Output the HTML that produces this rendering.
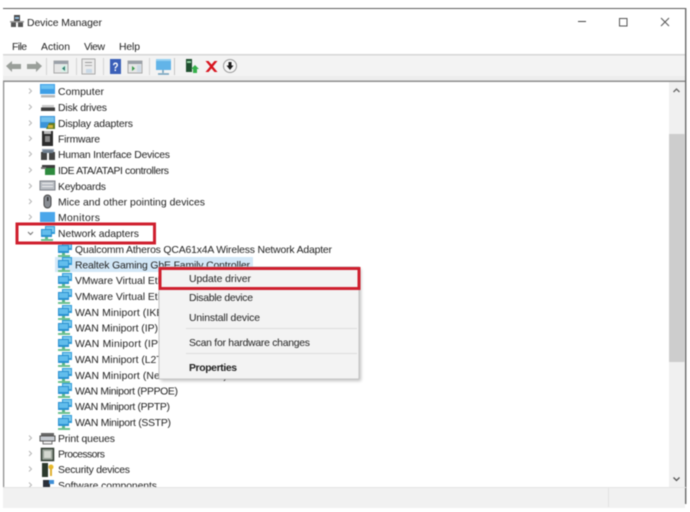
<!DOCTYPE html>
<html><head><meta charset="utf-8"><style>
html,body{margin:0;padding:0;background:#fff;width:690px;height:512px;overflow:hidden}
svg{display:block;filter:blur(.5px)}
text{font-family:"Liberation Sans",sans-serif;font-size:10.4px;fill:#222}
</style></head><body>
<svg width="690" height="512" viewBox="0 0 690 512" xmlns="http://www.w3.org/2000/svg">
<defs>
<g id="net"><rect x="5" y="0" width="10" height="8" fill="#2f9ad8"/><rect x="6" y="1" width="8" height="5" fill="#7fcdf0"/><rect x="1" y="3" width="11" height="8" fill="#2a90d0"/><rect x="2" y="4" width="9" height="5" fill="#62bdec"/><rect x="5" y="11" width="3" height="2" fill="#59b58a"/><rect x="1" y="13" width="12" height="2" fill="#6cc08e"/></g>
<path id="chev" d="M0 0l2.500 2.500L0 5" fill="none" stroke="#b5b5b5" stroke-width="1"/>
</defs>

<!-- window frame -->
<rect x="3" y="8" width="683" height="1" fill="#5c5c5c"/>
<rect x="685" y="8" width="1.400" height="496" fill="#6a6a6a"/>
<rect x="3" y="82" width="1.200" height="406" fill="#8a8a8a"/>

<!-- title -->
<g>
<rect x="14" y="15" width="6" height="6" fill="#4a4a4a"/><rect x="11" y="22" width="5" height="5" fill="#555"/><rect x="18" y="22" width="5" height="5" fill="#555"/><rect x="10" y="21" width="14" height="1.500" fill="#999"/><rect x="15" y="17" width="4" height="2" fill="#8fb8d8"/>
</g>
<text x="27" y="26" textLength="75" lengthAdjust="spacing">Device Manager</text>
<rect x="578" y="21" width="8" height="1" fill="#444"/>
<rect x="619.500" y="18.500" width="7.500" height="7.500" fill="none" stroke="#555" stroke-width="1"/>
<path d="M661 18l8 8M669 18l-8 8" stroke="#555" stroke-width="1" fill="none"/>

<!-- menu -->
<text x="12" y="50" textLength="15" lengthAdjust="spacing">File</text>
<text x="41" y="50" textLength="29" lengthAdjust="spacing">Action</text>
<text x="84" y="50" textLength="21" lengthAdjust="spacing">View</text>
<text x="119" y="50" textLength="21" lengthAdjust="spacing">Help</text>

<!-- toolbar -->
<rect x="3" y="54" width="682" height="1.500" fill="#d6d6d6"/>
<rect x="3" y="55.500" width="682" height="25" fill="#f3f3f3"/>
<rect x="3" y="76" width="682" height="5" fill="#ededed"/>
<rect x="3" y="80.500" width="682" height="1.500" fill="#8e8e8e"/>
<path d="M6 66l6-5v3h9v5h-9v3z" fill="#9a9f9a"/>
<path d="M42 66l-6-5v3h-9v5h9v3z" fill="#9a9f9a"/>
<rect x="46" y="58" width="1" height="17" fill="#d5d5d5"/>
<rect x="54" y="61" width="14" height="12" fill="#e6e6e6" stroke="#a8a8a8" stroke-width="1"/><rect x="54" y="61" width="14" height="3" fill="#9aa0a8"/><rect x="61" y="65" width="6" height="7" fill="#d9efe6"/><path d="M65 66l-3 2.500 3 2.500z" fill="#2f7f6f"/>
<rect x="76" y="58" width="1" height="17" fill="#d5d5d5"/>
<rect x="82" y="59" width="13" height="15" fill="#ebebeb" stroke="#a9a9a9" stroke-width="1"/><rect x="85" y="62" width="7" height="1" fill="#999"/><rect x="85" y="65" width="7" height="1" fill="#aaa"/><rect x="86" y="69" width="6" height="4" fill="#c9d9e6"/>
<rect x="103" y="58" width="1" height="17" fill="#d5d5d5"/>
<rect x="110" y="59" width="11" height="15" fill="#3a5fb8"/>
<text x="112.500" y="71" style="font-size:12px;font-weight:bold;fill:#fff" textLength="6" lengthAdjust="spacingAndGlyphs">?</text>
<rect x="128" y="61" width="14" height="12" fill="#e6e6e6" stroke="#a8a8a8" stroke-width="1"/><rect x="128" y="61" width="14" height="3" fill="#9aa0a8"/><path d="M132 66l3 2.500-3 2.500z" fill="#3a9a4a"/><rect x="137" y="65" width="4" height="7" fill="#cfdbe6"/>
<rect x="149" y="58" width="1" height="17" fill="#d5d5d5"/>
<rect x="156" y="59" width="15" height="11" fill="#62b4e8"/><rect x="156" y="59" width="15" height="2" fill="#94d0f2"/><path d="M163 70v3M158 74h11" stroke="#6f9fbc" stroke-width="1.500"/>
<rect x="174" y="58" width="1" height="17" fill="#c5c5c5"/>
<rect x="186" y="59" width="6" height="13" fill="#1f4f2f"/><rect x="187" y="61" width="4" height="2" fill="#8fcf9f"/><path d="M191 69l4-4 4 4h-2v4h-4v-4z" fill="#35b04a"/>
<path d="M205.500 61l3 0 3 3.500 3-3.500 3 0-4.500 5.500 4.500 5.500-3 0-3-3.500-3 3.500-3 0 4.500-5.500z" fill="#d8141e"/>
<circle cx="230" cy="66" r="6.500" fill="#f7f7f7" stroke="#9a9a9a" stroke-width="1"/><path d="M228.500 62h3v3.500h2L230 70l-3.500-4.500h2z" fill="#1c1c1c"/>

<!-- tree: chevrons -->
<use href="#chev" x="29" y="88.500"/><use href="#chev" x="29" y="104.500"/><use href="#chev" x="29" y="120.500"/><use href="#chev" x="29" y="136"/><use href="#chev" x="29" y="151.500"/><use href="#chev" x="29" y="167.500"/><use href="#chev" x="29" y="183.500"/><use href="#chev" x="29" y="199"/><use href="#chev" x="29" y="214.500"/>
<path d="M28 232l2.500 2.500L33 232" fill="none" stroke="#707070" stroke-width="1"/>
<use href="#chev" x="29" y="435.500"/><use href="#chev" x="29" y="451"/><use href="#chev" x="29" y="466.500"/><use href="#chev" x="29" y="482.500"/>

<!-- top icons -->
<rect x="40" y="84" width="15" height="10" fill="#3f9fe6"/><rect x="41" y="85" width="13" height="4" fill="#6cc2f2"/><rect x="41" y="95" width="14" height="2.500" fill="#b9b9b9"/>
<rect x="42" y="105" width="12" height="3" fill="#c9c9c9"/><rect x="41" y="107.500" width="14" height="3.500" fill="#3e3e3e"/>
<rect x="40" y="116" width="15" height="12" fill="#3b94d8"/><rect x="41" y="117" width="13" height="5" fill="#74c2ee"/><path d="M46 129l3-6h6v6z" fill="#5e7a22"/><rect x="48" y="125" width="5" height="3" fill="#d2b33a"/>
<rect x="42" y="131" width="11" height="15" fill="#2d2d2d"/><rect x="44" y="131" width="7" height="3" fill="#bbb"/><rect x="45" y="136" width="5" height="6" fill="#8a8a8a"/>
<rect x="42" y="149" width="12" height="4" fill="#9aa8b8"/><rect x="41" y="152" width="6" height="8" fill="#444"/><rect x="49" y="152" width="6" height="8" fill="#444"/><rect x="43" y="150" width="10" height="3" fill="#6e7e8e"/>
<rect x="42" y="165" width="13" height="3" fill="#3c3c3c"/><rect x="45" y="168" width="10" height="7" fill="#2e8b3e"/><rect x="41" y="167" width="5" height="2" fill="#777"/>
<rect x="40" y="181" width="15" height="9" fill="#b8bcc2" stroke="#7e8288" stroke-width="1"/><rect x="42" y="183" width="11" height="1" fill="#eee"/><rect x="42" y="186" width="11" height="1" fill="#eee"/>
<rect x="44" y="195" width="7" height="13" rx="3.500" fill="#8a8e94" stroke="#444" stroke-width="1"/><rect x="47" y="197" width="1.500" height="4" fill="#333"/>
<rect x="40" y="212" width="15" height="10" fill="#4aa6ea"/>

<!-- tree text -->
<text x="58" y="95" textLength="46" lengthAdjust="spacing">Computer</text>
<text x="58" y="111" textLength="49" lengthAdjust="spacing">Disk drives</text>
<text x="58" y="127" textLength="75" lengthAdjust="spacing">Display adapters</text>
<text x="58" y="142.500" textLength="42" lengthAdjust="spacing">Firmware</text>
<text x="58" y="158" textLength="112" lengthAdjust="spacing">Human Interface Devices</text>
<text x="58" y="174" textLength="111" lengthAdjust="spacing">IDE ATA/ATAPI controllers</text>
<text x="58" y="190" textLength="48" lengthAdjust="spacing">Keyboards</text>
<text x="58" y="205.500" textLength="147" lengthAdjust="spacing">Mice and other pointing devices</text>
<text x="58" y="221" textLength="42" lengthAdjust="spacing">Monitors</text>
<rect x="20" y="222" width="140" height="3" fill="#fff"/>
<use href="#net" x="40" y="226"/>
<text x="58" y="237" textLength="81" lengthAdjust="spacing">Network adapters</text>

<!-- network children -->
<rect x="55" y="257" width="198" height="15" fill="#d3e8f8"/>
<use href="#net" x="57" y="242"/><use href="#net" x="57" y="257"/><use href="#net" x="57" y="273"/><use href="#net" x="57" y="289"/><use href="#net" x="57" y="305"/><use href="#net" x="57" y="320"/><use href="#net" x="57" y="336"/><use href="#net" x="57" y="352"/><use href="#net" x="57" y="368"/><use href="#net" x="57" y="383"/><use href="#net" x="57" y="399"/><use href="#net" x="57" y="415"/>
<text x="75" y="253" textLength="257" lengthAdjust="spacing">Qualcomm Atheros QCA61x4A Wireless Network Adapter</text>
<text x="75" y="268.500" textLength="175" lengthAdjust="spacing">Realtek Gaming GbE Family Controller</text>
<text x="75" y="284" textLength="112" lengthAdjust="spacing">VMware Virtual Ethernet</text>
<text x="75" y="300" textLength="112" lengthAdjust="spacing">VMware Virtual Ethernet</text>
<text x="75" y="316" textLength="103" lengthAdjust="spacing">WAN Miniport (IKEv2)</text>
<text x="75" y="331.500" textLength="83" lengthAdjust="spacing">WAN Miniport (IP)</text>
<text x="75" y="347" textLength="98" lengthAdjust="spacing">WAN Miniport (IPv6)</text>
<text x="75" y="363" textLength="98" lengthAdjust="spacing">WAN Miniport (L2TP)</text>
<text x="75" y="379" textLength="152" lengthAdjust="spacing">WAN Miniport (Network Monitor)</text>
<text x="75" y="394.500" textLength="103" lengthAdjust="spacing">WAN Miniport (PPPOE)</text>
<text x="75" y="410" textLength="95" lengthAdjust="spacing">WAN Miniport (PPTP)</text>
<text x="75" y="426" textLength="96" lengthAdjust="spacing">WAN Miniport (SSTP)</text>

<!-- bottom groups -->
<rect x="41" y="433" width="13" height="3" fill="#666"/><rect x="40" y="436" width="15" height="5" fill="#c8ccd2" stroke="#555" stroke-width="1"/><rect x="43" y="441" width="9" height="3" fill="#eee" stroke="#555" stroke-width=".8"/>
<text x="58" y="442" textLength="57" lengthAdjust="spacing">Print queues</text>
<rect x="41.500" y="448.500" width="12" height="12" fill="#9aa39a" stroke="#2e3a2e" stroke-width="1.500"/><rect x="44" y="451" width="7" height="7" fill="#d4d8d0"/>
<text x="58" y="457.500" textLength="47" lengthAdjust="spacing">Processors</text>
<rect x="42" y="463" width="6" height="14" fill="#2d3a2d"/><circle cx="51" cy="467" r="2.500" fill="#e8b92a"/><rect x="50" y="468" width="2" height="8" fill="#e0b030"/>
<text x="58" y="473" textLength="72" lengthAdjust="spacing">Security devices</text>
<rect x="43" y="480" width="7" height="8" fill="#2a2f38"/><rect x="49" y="480" width="5" height="4" fill="#3f8fd6"/>
<text x="58" y="489" textLength="99" lengthAdjust="spacing">Software components</text>

<!-- scrollbar -->
<rect x="669" y="82" width="16" height="406" fill="#f0f0f0"/>
<rect x="669" y="134" width="15.500" height="228" fill="#cdcdcd"/>
<path d="M673.500 92l3-3 3 3" fill="none" stroke="#666" stroke-width="1.300"/>
<path d="M673.500 477.500l3 3 3-3" fill="none" stroke="#555" stroke-width="1.300"/>

<!-- status bar -->
<rect x="3" y="487" width="683" height="1" fill="#e4e4e4"/>
<rect x="3" y="488" width="682" height="20" fill="#f1f1f1"/>
<rect x="608" y="488" width="1" height="19" fill="#e2e2e2"/>
<rect x="4" y="508" width="686" height="4" fill="#fff"/>

<!-- context menu -->
<rect x="161" y="269" width="200" height="112" fill="#000" opacity=".25" style="filter:blur(1.5px)"/>
<rect x="159" y="267" width="200" height="112" fill="#f3f3f3" stroke="#c4c4c4" stroke-width="1"/>
<text x="189" y="282" textLength="62" lengthAdjust="spacing">Update driver</text>
<text x="189" y="301" textLength="64" lengthAdjust="spacing">Disable device</text>
<text x="189" y="321" textLength="71" lengthAdjust="spacing">Uninstall device</text>
<rect x="186" y="328" width="171" height="1" fill="#dcdcdc"/>
<text x="189" y="346" textLength="121" lengthAdjust="spacing">Scan for hardware changes</text>
<rect x="186" y="353" width="171" height="1" fill="#dcdcdc"/>
<text x="189" y="371" textLength="48" lengthAdjust="spacing" style="font-weight:bold">Properties</text>

<!-- red boxes -->
<rect x="17" y="224" width="137.500" height="19" fill="none" stroke="#cf1f2e" stroke-width="3"/>
<rect x="160" y="268.500" width="199" height="20" fill="none" stroke="#cf1f2e" stroke-width="3"/>
</svg>
</body></html>
